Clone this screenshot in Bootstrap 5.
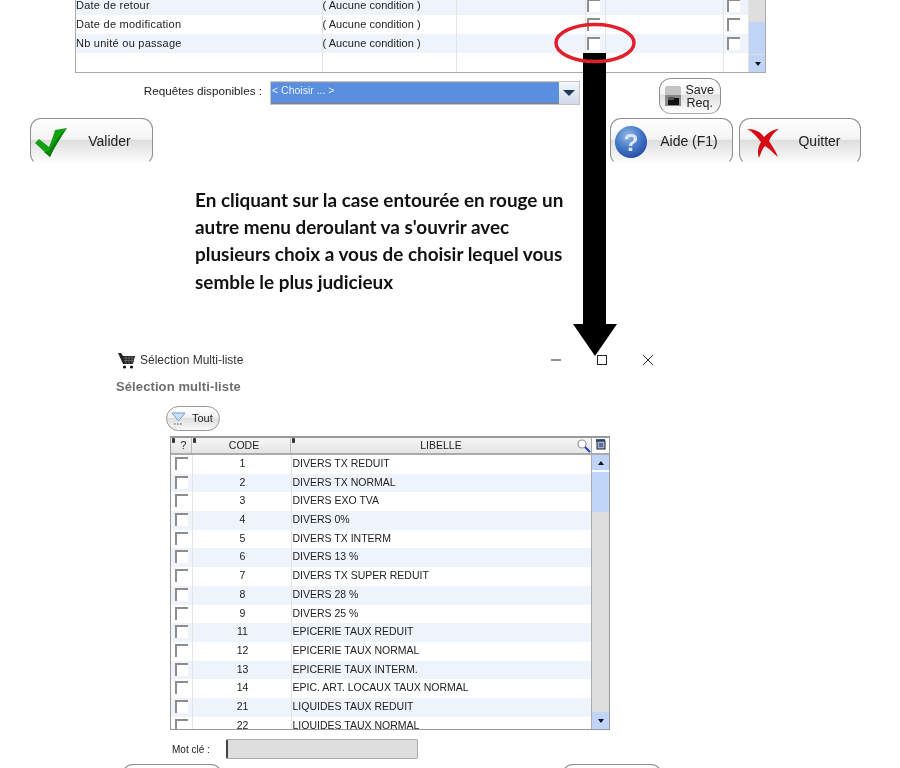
<!doctype html>
<html lang="fr">
<head>
<meta charset="utf-8">
<title>Sélection Multi-liste</title>
<link rel="stylesheet" href="https://cdn.jsdelivr.net/npm/bootstrap@5.3.0/dist/css/bootstrap.min.css">
<style>
html,body{margin:0;background:#fff;overflow:hidden}
.canvas{width:900px;height:768px;overflow:hidden;font-family:"Liberation Sans",Arial,sans-serif;color:#222;font-size:11px}
.soft{filter:blur(.4px)}
.overlay{position:absolute;left:0;top:0;pointer-events:none}

.top-grid{margin-left:75px;width:691px;height:73px;border:solid #aaa;border-width:0 1px 1px 1px;overflow:hidden}
.top-rows{margin-top:-4px}
.grid-table{table-layout:fixed;border-collapse:collapse;margin:0;width:100%;color:#222}
.grid-table td{padding:0;height:18.7px;line-height:18px;font-size:11px;border:0;border-right:1px solid #e4e4e4;background:transparent;white-space:nowrap;overflow:hidden;box-shadow:none}
.grid-table tr.alt td{background:#eef3fc}
.top-rows .grid-table td{height:19px;line-height:18px}
.grid-table td.name{padding-left:0;letter-spacing:.25px}
.grid-table td.cond{padding-left:0;letter-spacing:.05px}
.grid-table td.ctr{text-align:center;padding-left:2px}
.tick{display:block;width:13px;height:13px;background:#fff;border-top:2px solid #8d8d8d;border-left:2px solid #8d8d8d}
.tick-top{margin:3px 0 0 1px}
.tick-end{margin:3px 0 0 3px}
.tick-low{margin:2px 0 0 4px}
.bar{width:18px;flex:none;background:#dedede;display:flex;flex-direction:column}
.bar-thumb{background:#c0d4f8}
.bar-btn{background:#c0d4f8;display:flex;align-items:center;justify-content:center;height:17px}
.tri-d,.tri-u{width:0;height:0;border-left:3.5px solid transparent;border-right:3.5px solid transparent}
.tri-d{border-top:4px solid #111}
.tri-u{border-bottom:4px solid #111}

.req-row{margin-top:5px;height:36px}
.req-label{width:262px;text-align:right;font-size:11.7px;margin-top:-10px}
.req-select{margin-left:8px;width:310px;height:24px;margin-top:3px;border:1px solid #c4c4c4;background:#fff}
.req-value{flex:1;background:#5a8edf;color:#e8f0ff;font-size:10.5px;padding-left:1px;line-height:14px;border-bottom:1px dotted #a87a30;border-top:1px dotted #99a}
.req-open{width:20px;background:linear-gradient(#f4f7fb,#cfd9e6)}
.req-tri{width:0;height:0;border-left:6px solid transparent;border-right:6px solid transparent;border-top:6px solid #1c3a5c}
.gloss{display:flex;align-items:center;padding:0;color:#222;border:1px solid #8e8e8e;border-bottom-color:transparent;border-radius:11px;background:linear-gradient(#fff 0,#f4f4f4 45%,#dedede 47%,#efefef 75%,#fff 100%);font-family:"Liberation Sans",Arial,sans-serif}
.gloss:hover{color:#222;border-color:#8e8e8e}
.save-btn{width:62px;height:36px;margin-left:79px;border-radius:12px;border-bottom-color:#aaa;font-size:12.5px;line-height:13px}
.save-txt{display:block;margin-left:auto;margin-right:6px;padding-top:2px;text-align:center}
.act-row{margin-top:4px;margin-left:30px;width:831px;height:47px}
.act-btn{width:123px;height:47px;font-size:14px;position:relative}
.quit-btn{width:122px;margin-left:6px}
.act-lbl{flex:1;text-align:center}
.lbl-val{padding-left:36px}
.lbl-aide{padding-left:35px}
.lbl-quit{padding-left:39px}
.ico-check{position:absolute;left:3px;top:7px}
.ico-help{position:absolute;left:3px;top:6px}
.ico-quit{position:absolute;left:7px;top:8px}

.note{margin:21px 0 0 195px;width:375px;height:110px;font-family:Lato,sans-serif;font-weight:700;font-size:18.9px;line-height:27.2px;color:#111}

.win-title{margin:54px 0 0 118px;width:535px;height:20px;font-size:12px;color:#333}
.win-ctl{margin-left:auto;gap:36px}
.win-h{margin:7px 0 0 116px;height:20px;line-height:20px;font-size:13px;letter-spacing:.1px;font-weight:700;color:#6e6e6e}
.tout{margin:9px 0 0 166px;width:54px;height:25px;border:1px solid #999;border-radius:13px;font-size:11px;background:linear-gradient(#fff,#f2f2f2 45%,#dedede 50%,#f8f8f8)}
.tout-txt{margin-left:4px}
.list{margin:5px 0 0 170px;width:440px;height:294px;border:1px solid #999;border-top-width:2px;overflow:hidden}
.list-main{flex:1;min-width:0}
.list-head{height:17px;border-bottom:2px solid #aaa;background:linear-gradient(#f6f6f6,#e4e4e4);font-size:10.5px;text-align:center;line-height:15px}
.hc{position:relative;border-right:1px solid #bbb}
.hc::before{content:"";position:absolute;left:1px;top:0;width:3px;height:5px;background:#333;border-radius:1px}
.hc1{width:21px;padding-left:5px}.hc2{width:99px;padding-left:6px}.hc3{flex:1;border-right:0}
.zoomer{position:absolute;right:0;top:1px}
.list-bar{width:18px;flex:none;background:#dedede;border-left:1px solid #aaa;display:flex;flex-direction:column}
.corner{height:17px;background:#fff;border-bottom:2px solid #aaa;display:flex;justify-content:center}
.bar-up{height:15px}
.gap-white{height:2px;background:#fff}
.list-thumb{height:40px;background:#c0d4f8}
.list-space{flex:1}
.list .grid-table td{font-size:10.5px;line-height:16px}
.list .grid-table td.lib{padding-left:1px;border-right:0}
.key-row{margin:9px 0 0 172px;height:20px}
.key-label{width:54px;font-size:10px}
.key-input{width:192px;height:20px;background:#dedede;border:1px solid #aaa;border-left:2px solid #444;border-radius:2px}
.foot-row{margin:5px 0 0 122px;width:540px}
.foot-btn{width:100px;height:30px}
</style>
</head>
<body>
<main class="canvas position-relative">
<div class="soft">
  <section class="top-grid d-flex">
    <div class="flex-grow-1 top-rows">
      <table class="table grid-table">
        <colgroup><col style="width:246px"><col style="width:134px"><col style="width:129px"><col style="width:20px"><col style="width:118px"><col style="width:25px"></colgroup>
        <tr class="alt"><td class="name">Date de retour</td><td class="cond">( Aucune condition )</td><td></td><td><i class="tick tick-top"></i></td><td></td><td><i class="tick tick-end"></i></td></tr>
        <tr><td class="name">Date de modification</td><td class="cond">( Aucune condition )</td><td></td><td><i class="tick tick-top"></i></td><td></td><td><i class="tick tick-end"></i></td></tr>
        <tr class="alt"><td class="name">Nb unité ou passage</td><td class="cond">( Aucune condition )</td><td></td><td><i class="tick tick-top"></i></td><td></td><td><i class="tick tick-end"></i></td></tr>
        <tr><td></td><td></td><td></td><td></td><td></td><td></td></tr>
      </table>
    </div>
    <div class="bar">
      <div style="height:22px"></div>
      <div class="bar-thumb" style="height:32px"></div>
      <div class="bar-btn mt-auto"><span class="tri-d"></span></div>
    </div>
  </section>

  <section class="req-row d-flex align-items-center">
    <label class="req-label">Requêtes disponibles :</label>
    <div class="req-select d-flex align-self-start">
      <div class="req-value">&lt; Choisir ... &gt;</div>
      <div class="req-open d-flex align-items-center justify-content-center"><span class="req-tri"></span></div>
    </div>
    <button class="btn gloss save-btn" type="button">
      <svg width="20" height="22" viewBox="0 0 20 22" class="ms-1"><rect x="1" y="1" width="16" height="20" rx="2" fill="#c4c4c4"/><rect x="1" y="10" width="16" height="11" fill="#8a8a8a"/><rect x="4" y="13" width="11" height="7" fill="#111"/><rect x="4" y="12" width="6" height="3" fill="#555"/></svg>
      <span class="save-txt">Save<br>Req.</span>
    </button>
  </section>

  <section class="act-row d-flex">
    <button class="btn gloss act-btn" type="button">
      <svg class="ico-check" width="36" height="36" viewBox="0 0 36 36"><path d="M1 17L5 13L15 21C18 13 20 8 21 4L33 2C26 12 20 22 16 31Z" fill="#12a012"/><path d="M16 31C20 22 26 12 33 2C26 9 20 16 15 25L10 26Z" fill="#078007"/></svg>
      <span class="act-lbl lbl-val">Valider</span>
    </button>
    <button class="btn gloss act-btn ms-auto" type="button">
      <svg class="ico-help" width="34" height="34" viewBox="0 0 36 36"><defs><radialGradient id="qb" cx=".4" cy=".3" r=".8"><stop offset="0" stop-color="#8fb9e8"/><stop offset=".55" stop-color="#3f74c4"/><stop offset="1" stop-color="#23409e"/></radialGradient></defs><circle cx="18" cy="18" r="17" fill="url(#qb)"/><text x="18" y="27" text-anchor="middle" font-family="Liberation Sans" font-weight="700" font-size="26" fill="#dfe6f2">?</text></svg>
      <span class="act-lbl lbl-aide">Aide (F1)</span>
    </button>
    <button class="btn gloss act-btn quit-btn" type="button">
      <svg class="ico-quit" width="33" height="32" viewBox="0 0 33 32"><path d="M0 2C8 2 14 5 17 10C21 6 26 2 32 2C27 5 24 9 22 14C25 19 29 24 31 30C27 27 23 22 18 19C15 22 14 26 12 31C10 26 11 20 14 15C10 10 6 5 0 2Z" fill="#d40b14"/></svg>
      <span class="act-lbl lbl-quit">Quitter</span>
    </button>
  </section>

  <p class="note mb-0">En cliquant sur la case entourée en rouge un autre menu deroulant va s'ouvrir avec plusieurs choix a vous de choisir lequel vous semble le plus judicieux</p>

  <header class="win-title d-flex align-items-center">
    <svg width="18" height="17" viewBox="0 0 18 17" class="me-1"><path d="M0 1L3 1L5 4L17 4L15 12L5 12Z" fill="#222"/><path d="M5.500 6H16M6 8.500H15.500M8 4V12M11 4V12M14 4V12" stroke="#888" stroke-width=".6"/><circle cx="6.500" cy="15" r="1.600" fill="#111"/><circle cx="13.500" cy="15" r="1.600" fill="#111"/></svg>
    <span>Sélection Multi-liste</span>
    <span class="win-ctl d-flex align-items-center">
      <svg width="10" height="10" viewBox="0 0 10 10"><path d="M0 5H10" stroke="#222"/></svg>
      <svg width="10" height="10" viewBox="0 0 10 10"><rect x=".5" y=".5" width="9" height="9" fill="#fff" stroke="#222"/></svg>
      <svg width="10" height="10" viewBox="0 0 10 10"><path d="M0 0L10 10M10 0L0 10" stroke="#222"/></svg>
    </span>
  </header>
  <h1 class="win-h mb-0">Sélection multi-liste</h1>
  <button class="btn tout d-flex align-items-center p-0" type="button">
    <svg width="17" height="15" viewBox="0 0 17 15" class="ms-1"><path d="M1 2H14L7.500 10Z" fill="#cfe0f8" stroke="#6f9ad8"/><path d="M3 13h1.500M6 13h1.500M9 13h1.500" stroke="#444"/></svg>
    <span class="tout-txt">Tout</span>
  </button>

  <section class="list d-flex">
    <div class="list-main">
      <div class="list-head d-flex">
        <div class="hc hc1">?</div>
        <div class="hc hc2">CODE</div>
        <div class="hc hc3">LIBELLE
          <svg class="zoomer" width="14" height="14" viewBox="0 0 14 14"><circle cx="5" cy="5" r="4" fill="#fff" stroke="#999" stroke-width="1.200"/><path d="M8 8L13 13" stroke="#1a3fd0" stroke-width="2"/></svg>
        </div>
      </div>
      <table class="table grid-table">
        <colgroup><col style="width:21px"><col style="width:99px"><col></colgroup>
        <tr><td><i class="tick tick-low"></i></td><td class="ctr">1</td><td class="lib">DIVERS TX REDUIT</td></tr>
        <tr class="alt"><td><i class="tick tick-low"></i></td><td class="ctr">2</td><td class="lib">DIVERS TX NORMAL</td></tr>
        <tr><td><i class="tick tick-low"></i></td><td class="ctr">3</td><td class="lib">DIVERS EXO TVA</td></tr>
        <tr class="alt"><td><i class="tick tick-low"></i></td><td class="ctr">4</td><td class="lib">DIVERS 0%</td></tr>
        <tr><td><i class="tick tick-low"></i></td><td class="ctr">5</td><td class="lib">DIVERS TX INTERM</td></tr>
        <tr class="alt"><td><i class="tick tick-low"></i></td><td class="ctr">6</td><td class="lib">DIVERS 13 %</td></tr>
        <tr><td><i class="tick tick-low"></i></td><td class="ctr">7</td><td class="lib">DIVERS TX SUPER REDUIT</td></tr>
        <tr class="alt"><td><i class="tick tick-low"></i></td><td class="ctr">8</td><td class="lib">DIVERS 28 %</td></tr>
        <tr><td><i class="tick tick-low"></i></td><td class="ctr">9</td><td class="lib">DIVERS 25 %</td></tr>
        <tr class="alt"><td><i class="tick tick-low"></i></td><td class="ctr">11</td><td class="lib">EPICERIE TAUX REDUIT</td></tr>
        <tr><td><i class="tick tick-low"></i></td><td class="ctr">12</td><td class="lib">EPICERIE TAUX NORMAL</td></tr>
        <tr class="alt"><td><i class="tick tick-low"></i></td><td class="ctr">13</td><td class="lib">EPICERIE TAUX INTERM.</td></tr>
        <tr><td><i class="tick tick-low"></i></td><td class="ctr">14</td><td class="lib">EPIC. ART. LOCAUX TAUX NORMAL</td></tr>
        <tr class="alt"><td><i class="tick tick-low"></i></td><td class="ctr">21</td><td class="lib">LIQUIDES TAUX REDUIT</td></tr>
        <tr><td><i class="tick tick-low"></i></td><td class="ctr">22</td><td class="lib">LIQUIDES TAUX NORMAL</td></tr>
      </table>
    </div>
    <div class="list-bar">
      <div class="corner"><svg width="11" height="12" viewBox="0 0 11 12"><rect x="1" y="1" width="9" height="3" fill="#45598c"/><rect x="2" y="3" width="8" height="8" fill="#9db4de" stroke="#222"/><path d="M4 6H8M4 8H8" stroke="#224"/></svg></div>
      <div class="bar-btn bar-up"><span class="tri-u"></span></div>
      <div class="gap-white"></div>
      <div class="list-thumb"></div>
      <div class="list-space"></div>
      <div class="bar-btn"><span class="tri-d"></span></div>
    </div>
  </section>

  <section class="key-row d-flex align-items-center">
    <label class="key-label">Mot clé :</label>
    <div class="key-input"></div>
  </section>

  <section class="foot-row d-flex justify-content-between">
    <button class="btn gloss foot-btn" type="button"></button>
    <button class="btn gloss foot-btn" type="button"></button>
  </section>
</div>

  <svg class="overlay" width="900" height="768" viewBox="0 0 900 768">
    <path d="M583 53H606V324H617L595 356L573 324H583Z" fill="#000"/>
    <ellipse cx="595" cy="43" rx="39" ry="18.500" fill="none" stroke="#e1202c" stroke-width="3.500"/>
  </svg>
</main>
</body>
</html>
